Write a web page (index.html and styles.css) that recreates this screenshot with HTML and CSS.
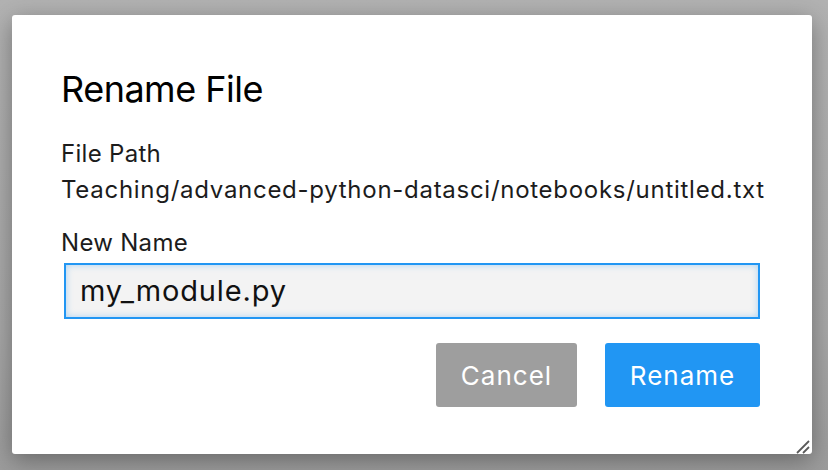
FILE: index.html
```html
<!DOCTYPE html>
<html>
<head>
<meta charset="utf-8">
<link rel="stylesheet" href="styles.css">
</head>
<body>
<div class="dialog">
  <h1 class="title">Rename File</h1>
  <div class="label">File Path</div>
  <div class="path">Teaching/advanced-python-datasci/notebooks/untitled.txt</div>
  <div class="label label-name">New Name</div>
  <div class="input">my_module.py</div>
  <div class="actions">
    <button class="btn btn-cancel">Cancel</button>
    <button class="btn btn-rename">Rename</button>
  </div>
  <svg class="grip" width="16" height="16" viewBox="0 0 16 16">
    <line x1="2" y1="15" x2="14" y2="3" stroke="#5a5a5a" stroke-width="1.8"/>
    <line x1="8" y1="15" x2="14" y2="9" stroke="#5a5a5a" stroke-width="1.8"/>
  </svg>
</div>
</body>
</html>
```
FILE: styles.css
```css
html, body {
  margin: 0;
  height: 100%;
}
body {
  background: linear-gradient(180deg, #b2b2b2 0%, #a8a8a8 70%, #9c9c9c 100%);
  padding: 15px 0 0 12px;
  box-sizing: border-box;
  font-family: Inter, "Noto Sans", sans-serif;
  color: #1c1c1c;
}
.dialog {
  position: relative;
  width: 800px;
  height: 439px;
  box-sizing: border-box;
  background: #fff;
  border-radius: 3px;
  box-shadow: 0 6px 24px rgba(0,0,0,0.35);
  padding: 54px 49px 0 49px;
}
.title {
  margin: 0;
  font-size: 36px;
  font-weight: 400;
  line-height: 40px;
  letter-spacing: -0.5px;
  color: #000;
}
.label {
  margin-top: 30px;
  font-size: 24px;
  line-height: 30px;
  letter-spacing: 0.3px;
}
.path {
  margin-top: 6px;
  font-size: 24px;
  line-height: 30px;
  letter-spacing: 0.72px;
  white-space: nowrap;
}
.label-name {
  margin-top: 23px;
}
.input {
  margin: 5px 0 0 3px;
  width: 696px;
  height: 56px;
  box-sizing: border-box;
  border: 2px solid #2196f3;
  background: #f3f3f3;
  box-shadow: inset 0 0 7px rgba(33,150,243,0.35);
  font-size: 29px;
  line-height: 52px;
  letter-spacing: 0.85px;
  padding-left: 14px;
  color: #111;
}
.actions {
  display: flex;
  justify-content: flex-end;
  gap: 28px;
  margin-top: 24px;
  padding-right: 3px;
}
.btn {
  border: none;
  border-radius: 3px;
  height: 64px;
  color: #fff;
  font-family: Inter, "Noto Sans", sans-serif;
  font-size: 26px;
  letter-spacing: 1px;
  padding: 0;
}
.btn-cancel {
  width: 141px;
  background: #9e9e9e;
}
.btn-rename {
  width: 155px;
  background: #2196f3;
}
.grip {
  position: absolute;
  right: 1px;
  bottom: 0;
}
```
